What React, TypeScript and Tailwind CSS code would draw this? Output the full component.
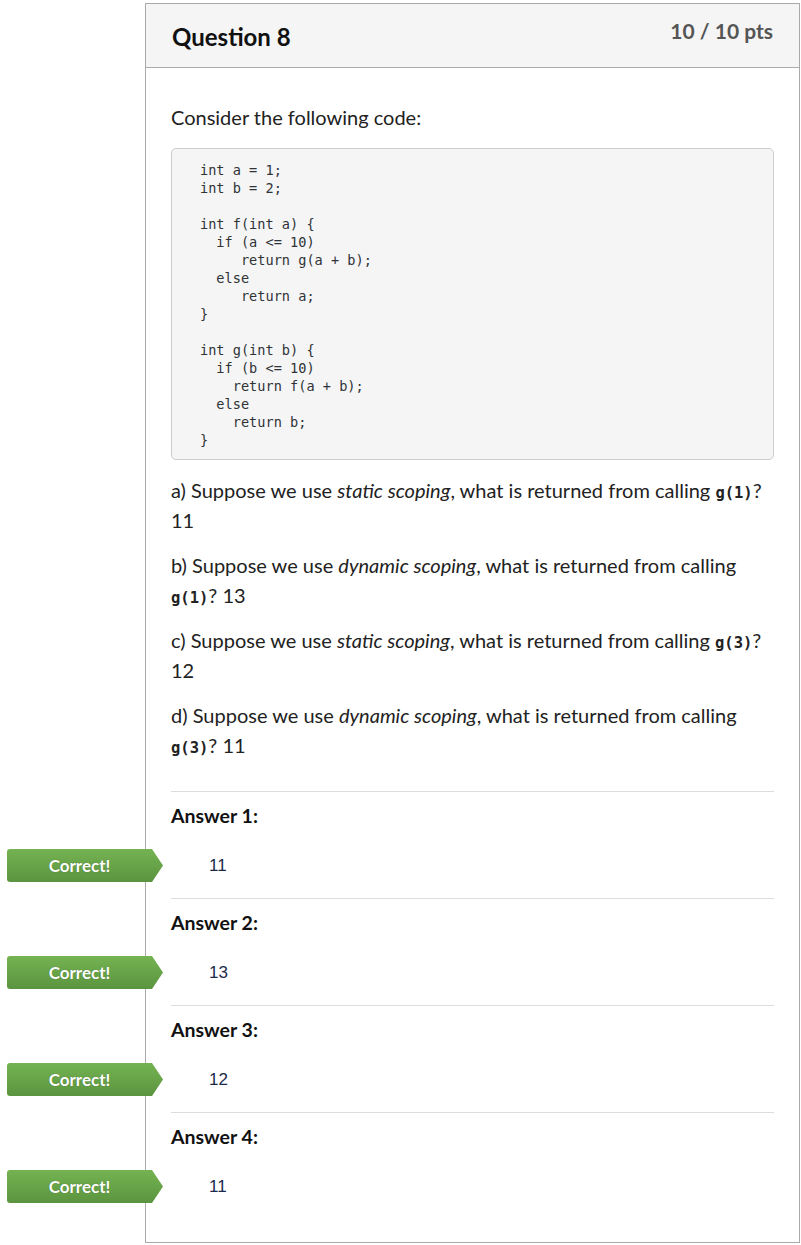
const CODE = `int a = 1;
int b = 2;

int f(int a) {
  if (a <= 10)
     return g(a + b);
  else
     return a;
}

int g(int b) {
  if (b <= 10)
    return f(a + b);
  else
    return b;
}`;

const ANSWERS = ["11", "13", "12", "11"];

function Mono({ children }: { children: React.ReactNode }) {
  return (
    <code className="font-bold text-[15.5px] leading-none [font-family:'DejaVu_Sans_Mono',monospace]">{children}</code>
  );
}

function CorrectBadge() {
  return (
    <div className="absolute left-[-164px] top-0 flex h-[33px] w-[156px] items-center rounded-l-[3px] bg-gradient-to-b from-[#74b352] to-[#5b943f] pr-[11px] [clip-path:polygon(0_0,calc(100%_-_11px)_0,100%_50%,calc(100%_-_11px)_100%,0_100%)]">
      <span className="w-full text-center text-[17px] font-bold text-white [text-shadow:0_0_1px_rgba(0,0,0,0.35)]">
        Correct!
      </span>
    </div>
  );
}

export default function App() {
  return (
    <div className="pt-[3px] pb-[1px] [font-family:Lato,'Noto_Sans',sans-serif]">
      <div className="ml-[145px] w-[655px] border border-[#aaaaaa] bg-white">
        {/* Header */}
        <div className="flex h-[64px] items-start justify-between border-b border-[#aaaaaa] bg-[#f5f5f5] px-[26px]">
          <h2 className="pt-[15px] text-[24px] font-bold leading-[36px] text-[#111]">Question 8</h2>
          <div className="pt-[11px] text-[21px] font-bold leading-[32px] text-[#555]">10 / 10 pts</div>
        </div>

        {/* Body */}
        <div className="px-[25px] pt-[34px] pb-[23px] text-[20px] leading-[30px] text-[#222]">
          <p>Consider the following code:</p>
          <pre className="mt-[16px] rounded-[5px] border border-[#cccccc] bg-[#f5f5f5] px-[28px] pt-[12px] pb-[10px] text-[13.6px] leading-[18px] text-[#2f3338] [font-family:'DejaVu_Sans_Mono',monospace]">
            {CODE}
          </pre>

          <p className="mt-[15px]">
            a) Suppose we use <em>static scoping</em>, what is returned from calling <Mono>g(1)</Mono>?
            <br />
            11
          </p>
          <p className="mt-[15px]">
            b) Suppose we use <em>dynamic scoping</em>, what is returned from calling
            <br />
            <Mono>g(1)</Mono>? 13
          </p>
          <p className="mt-[15px]">
            c) Suppose we use <em>static scoping</em>, what is returned from calling <Mono>g(3)</Mono>?
            <br />
            12
          </p>
          <p className="mt-[15px]">
            d) Suppose we use <em>dynamic scoping</em>, what is returned from calling
            <br />
            <Mono>g(3)</Mono>? 11
          </p>

          <div className="mt-[31px]">
            {ANSWERS.map((value, i) => (
              <div key={i} className="border-t border-[#dddddd] pt-[9px] pb-[16px]">
                <h3 className="font-bold text-[19.5px] text-[#111]">Answer {i + 1}:</h3>
                <div className="relative mt-[18px] flex h-[33px] items-center pl-[38px]">
                  <CorrectBadge />
                  <span className="text-[17px] text-[#1b2a4a] [font-family:'Liberation_Sans',Arial,sans-serif]">
                    {value}
                  </span>
                </div>
              </div>
            ))}
          </div>
        </div>
      </div>
    </div>
  );
}
